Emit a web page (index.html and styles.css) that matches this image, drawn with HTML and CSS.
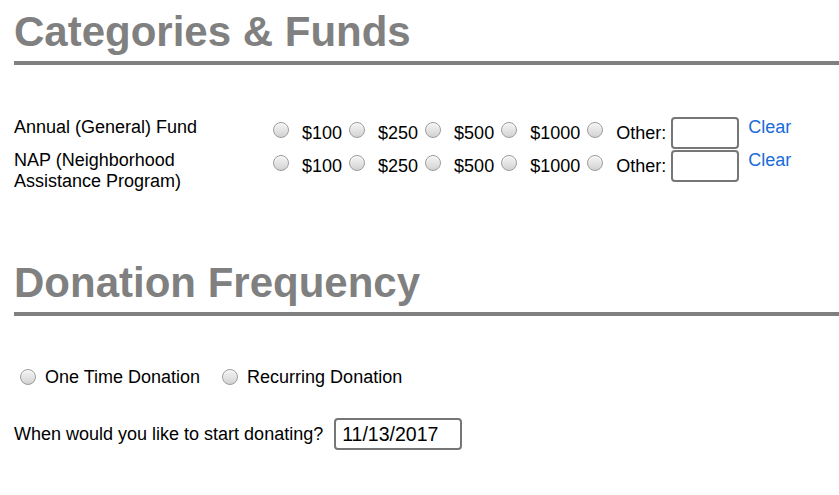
FILE: index.html
```html
<!DOCTYPE html>
<html lang="en">
<head>
<meta charset="utf-8">
<title>Categories &amp; Funds</title>
<link rel="stylesheet" href="styles.css">
</head>
<body>
<div class="page">
  <h2 class="section-title">Categories &amp; Funds</h2>
  <div class="funds">
    <div class="fund-name">Annual (General) Fund</div>
    <div class="fund-options">
      <input class="radio first" type="radio" name="annual"><span class="amount">$100</span>
      <input class="radio" type="radio" name="annual"><span class="amount">$250</span>
      <input class="radio" type="radio" name="annual"><span class="amount">$500</span>
      <input class="radio" type="radio" name="annual"><span class="amount">$1000</span>
      <input class="radio" type="radio" name="annual"><span class="amount">Other:</span>
      <input class="other-input" type="text">
    </div>
    <a class="clear" href="#">Clear</a>

    <div class="fund-name">NAP (Neighborhood Assistance Program)</div>
    <div class="fund-options">
      <input class="radio first" type="radio" name="nap"><span class="amount">$100</span>
      <input class="radio" type="radio" name="nap"><span class="amount">$250</span>
      <input class="radio" type="radio" name="nap"><span class="amount">$500</span>
      <input class="radio" type="radio" name="nap"><span class="amount">$1000</span>
      <input class="radio" type="radio" name="nap"><span class="amount">Other:</span>
      <input class="other-input" type="text">
    </div>
    <a class="clear" href="#">Clear</a>
  </div>

  <h2 class="section-title second">Donation Frequency</h2>
  <div class="frequency">
    <input class="radio freq-radio" type="radio" name="freq"><span class="freq-label">One Time Donation</span>
    <input class="radio freq-radio" type="radio" name="freq"><span class="freq-label">Recurring Donation</span>
  </div>
  <div class="start-row">
    <span class="start-label">When would you like to start donating?</span>
    <input class="date-input" type="text" value="11/13/2017">
  </div>
</div>
</body>
</html>
```

FILE: styles.css
```css
html, body {
  margin: 0;
  padding: 0;
  background: #fff;
}

body {
  font-family: "Liberation Sans", Arial, sans-serif;
  font-size: 18px;
  color: #000;
}

.page {
  padding: 8px 0 0 14px;
}

.section-title {
  margin: 0;
  font-size: 42px;
  font-weight: bold;
  color: #808080;
  line-height: normal;
  padding-bottom: 5px;
  border-bottom: 4px solid #808080;
}

.section-title.second {
  margin-top: 67px;
}

.funds {
  display: grid;
  grid-template-columns: 254px auto 1fr;
  row-gap: 1px;
  margin-top: 52px;
  align-items: start;
}

.fund-name {
  box-sizing: border-box;
  padding-right: 40px;
  line-height: 21px;
}

.fund-options {
  display: flex;
  align-items: center;
  height: 32px;
}

.radio {
  -webkit-appearance: none;
  appearance: none;
  box-sizing: border-box;
  width: 16px;
  height: 16px;
  margin: 0 13px 6px 7px;
  border-radius: 50%;
  border: 1px solid #9c9c9c;
  background: linear-gradient(180deg, #f4f4f4 0%, #e4e4e4 50%, #d2d2d2 100%);
  box-shadow: inset 0 1px 1px rgba(255, 255, 255, 0.8);
  flex: none;
}

.radio.first {
  margin-left: 5px;
}

.amount {
  line-height: 21px;
}

.other-input {
  box-sizing: border-box;
  width: 68px;
  height: 32px;
  margin: 0 0 0 5px;
  border: 2px solid #767676;
  border-radius: 4px;
  background: #fff;
  font: inherit;
  padding: 0 4px;
}

.clear {
  margin-left: 9px;
  color: #1a6bd8;
  text-decoration: none;
  line-height: 21px;
  justify-self: start;
}

.frequency {
  display: flex;
  align-items: center;
  margin-top: 51px;
  height: 21px;
}

.freq-radio {
  margin: 0 9px 2px 6px;
}

.freq-radio + .freq-label + .freq-radio {
  margin-left: 22px;
}

.freq-label {
  line-height: 21px;
}

.start-row {
  display: flex;
  align-items: center;
  margin-top: 30px;
}

.start-label {
  line-height: 21px;
}

.date-input {
  box-sizing: border-box;
  width: 128px;
  height: 32px;
  margin-left: 11px;
  border: 2px solid #767676;
  border-radius: 4px;
  padding: 0 0 0 6px;
  font-family: "Liberation Sans", Arial, sans-serif;
  font-size: 19.5px;
  color: #000;
  background: #fff;
}
```
